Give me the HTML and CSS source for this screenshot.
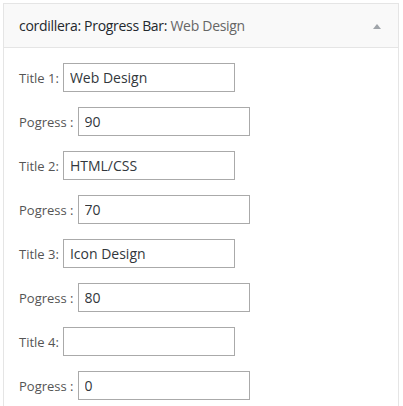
FILE: index.html
```html
<!DOCTYPE html>
<html>
<head>
<meta charset="utf-8">
<link rel="stylesheet" href="styles.css">
</head>
<body>
<div class="widget">
  <div class="widget-top">
    <h3 class="widget-title">cordillera: Progress Bar:<span class="in-title"> Web Design</span></h3>
    <span class="toggle"></span>
  </div>
  <div class="widget-inside">
    <p class="row"><label>Title 1:</label><input class="field" type="text" value="Web Design"></p>
    <p class="row"><label>Pogress :</label><input class="field" type="text" value="90"></p>
    <p class="row"><label>Title 2:</label><input class="field" type="text" value="HTML/CSS"></p>
    <p class="row"><label>Pogress :</label><input class="field" type="text" value="70"></p>
    <p class="row"><label>Title 3:</label><input class="field" type="text" value="Icon Design"></p>
    <p class="row"><label>Pogress :</label><input class="field" type="text" value="80"></p>
    <p class="row"><label>Title 4:</label><input class="field" type="text" value=""></p>
    <p class="row"><label>Pogress :</label><input class="field" type="text" value="0"></p>
  </div>
</div>
</body>
</html>
```
FILE: styles.css
```css
html, body {
  margin: 0;
  padding: 0;
  background: #fff;
}
body {
  font-family: "Open Sans", "Liberation Sans", sans-serif;
  color: #555;
}
.widget {
  margin: 3px 4px 0 3px;
  border: 1px solid #e5e5e5;
  border-bottom: none;
  background: #fff;
  height: 403px;
  box-sizing: border-box;
}
.widget-top {
  height: 43px;
  background: #f9f9f9;
  border-bottom: 1px solid #e5e5e5;
  display: flex;
  align-items: center;
  padding: 0 15px;
}
.widget-title {
  flex: 1;
  margin: 0;
  font-size: 14px;
  font-weight: 400;
  color: #23282d;
  white-space: nowrap;
  letter-spacing: -0.3px;
}
.in-title {
  font-weight: 400;
  color: #666;
}
.toggle {
  width: 0;
  height: 0;
  border-left: 4px solid transparent;
  border-right: 4px solid transparent;
  border-bottom: 5px solid #a0a5aa;
  margin-right: 2px;
  margin-top: 1px;
}
.widget-inside {
  padding: 15px 15px 0 15px;
  display: flex;
  flex-direction: column;
  gap: 15px;
}
.row {
  margin: 0;
  display: flex;
  align-items: center;
  font-size: 13px;
}
.row label {
  color: #555;
  margin-right: 4px;
}
.field {
  width: 172px;
  height: 29px;
  box-sizing: border-box;
  border: 1px solid #aaa;
  padding: 0 6px;
  font-family: "Open Sans", "Liberation Sans", sans-serif;
  font-size: 14px;
  color: #32373c;
  background: #fff;
  margin: 0;
  outline: none;
}
```
